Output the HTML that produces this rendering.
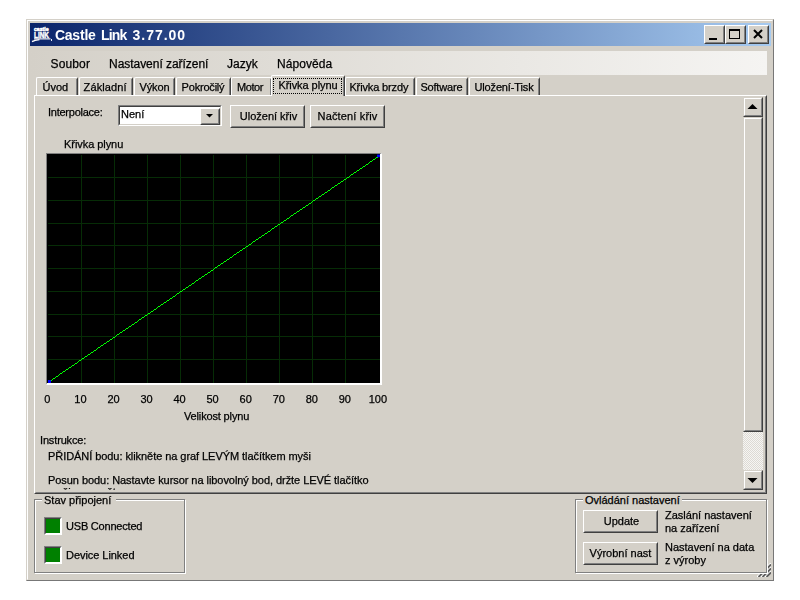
<!DOCTYPE html>
<html lang="cs">
<head>
<meta charset="utf-8">
<title>Castle Link 3.77.00</title>
<style>
html,body{margin:0;padding:0;background:#fff;}
body{width:800px;height:600px;position:relative;overflow:hidden;font-family:"Liberation Sans",sans-serif;font-size:11px;color:#000;}
.abs{position:absolute;}
.t,.tab span,.btn span,#menu span,.lbl,#title .txt{will-change:opacity;}
.t,.tab span,.btn span,#menu span,.lbl{-webkit-text-stroke:0.25px #000;}
#win{position:absolute;left:26px;top:19px;width:748px;height:562px;background:#d4d0c8;box-sizing:border-box;
 border:1px solid;border-color:#d4d0c8 #777 #777 #d4d0c8;}
#win:before{content:"";position:absolute;left:0;top:0;right:0;bottom:0;border:1px solid;border-color:#fff #d4d0c8 #d4d0c8 #fff;}
#title{position:absolute;left:30px;top:23px;width:741px;height:23px;background:linear-gradient(to right,#0a246a 0%,#a6caf0 100%);}
#title .txt{position:absolute;left:24px;top:4px;font-weight:bold;font-size:14px;line-height:17px;color:#fff;white-space:nowrap;}
.cbtn{position:absolute;top:25px;height:19px;width:21px;background:#d4d0c8;box-sizing:border-box;border:1px solid;border-color:#fff #404040 #404040 #fff;}
.cbtn:before{content:"";position:absolute;left:0;top:0;right:0;bottom:0;border:1px solid;border-color:#d4d0c8 #808080 #808080 #d4d0c8;}
#menu{position:absolute;left:30px;top:51px;width:737px;height:24px;background:linear-gradient(to right,#d4d0c8 0%,#f5f4f2 100%);}
#menu span{position:absolute;top:6px;font-size:12px;line-height:14px;white-space:nowrap;}
.t{position:absolute;white-space:nowrap;line-height:13px;font-size:11px;}
.tab{position:absolute;top:77px;height:18px;box-sizing:border-box;background:#d4d0c8;border-top:1px solid #fff;border-left:1px solid #fff;border-right:1px solid #404040;border-radius:2px 2px 0 0;}
.tab:after{content:"";position:absolute;right:0;top:1px;bottom:0;width:1px;background:#808080;}
.tab span{position:absolute;left:6px;top:3px;white-space:nowrap;line-height:13px;}
.tab.sel{top:75px;height:21px;z-index:3;}
.tab.sel span{left:6px;top:3px;}
#pane{position:absolute;left:34px;top:95px;width:733px;height:399px;box-sizing:border-box;border:1px solid;border-color:#fff #404040 #404040 #fff;}
#pane:before{content:"";position:absolute;left:0;top:0;right:0;bottom:0;border:1px solid;border-color:#d4d0c8 #808080 #808080 #d4d0c8;}
.btn{position:absolute;box-sizing:border-box;background:#d4d0c8;border:1px solid;border-color:#fff #404040 #404040 #fff;text-align:center;font-size:11px;}
.btn:before{content:"";position:absolute;left:0;top:0;right:0;bottom:0;border:1px solid;border-color:#d4d0c8 #808080 #808080 #d4d0c8;}
.btn span{position:relative;white-space:nowrap;}
.btn.sb{border-color:#d4d0c8 #404040 #404040 #d4d0c8;}
.btn.sb:before{border-color:#fff #808080 #808080 #fff;}
.sunken{position:absolute;box-sizing:border-box;border:1px solid;border-color:#808080 #fff #fff #808080;}
.sunken:before{content:"";position:absolute;left:0;top:0;right:0;bottom:0;border:1px solid;border-color:#404040 #d4d0c8 #d4d0c8 #404040;}
.sunken.w2:before{border-color:#404040 #fff #fff #404040;}
.grp{position:absolute;box-sizing:border-box;border:1px solid #808080;box-shadow:1px 1px 0 #fff, inset 1px 1px 0 #fff;}
.grp .lbl{position:absolute;top:-6px;left:7px;background:#d4d0c8;padding:0 0 0 2px;line-height:13px;height:12px;white-space:nowrap;}
</style>
</head>
<body>
<div id="win"></div>
<div id="title">
 <svg class="abs" style="left:0px;top:2px" width="24" height="20" viewBox="0 0 24 20">
  <text x="4" y="6.4" font-family="Liberation Sans, sans-serif" font-size="6" font-weight="bold" fill="#fff" stroke="#fff" stroke-width="0.55" textLength="14.5" lengthAdjust="spacingAndGlyphs">castle</text>
  <text x="4" y="13.4" font-family="Liberation Sans, sans-serif" font-size="9.6" font-weight="bold" fill="#fff" stroke="#fff" stroke-width="0.5" textLength="15" lengthAdjust="spacingAndGlyphs">LINK</text>
  <path d="M4 13.9 H20.5" stroke="#fff" stroke-width="1.1" fill="none"/>
  <path d="M2 16.6 C4 15.4 6 14.9 9.5 14.6" stroke="#fff" stroke-width="1.3" fill="none"/>
  <rect x="21" y="14" width="1" height="2" fill="#e8ecf8"/>
 </svg>
 <div class="ttl"><span class="txt" style="left:24.9px;letter-spacing:-0.21px">Castle</span> <span class="txt" style="left:71.1px;letter-spacing:-0.84px">Link</span> <span class="txt" style="left:102.6px;letter-spacing:0.97px">3.77.00</span></div>
</div>
<div class="cbtn" style="left:704px"><svg class="abs" style="left:0;top:0" width="19" height="17"><rect x="4" y="12" width="8" height="2" fill="#000"/></svg></div>
<div class="cbtn" style="left:725px"><svg class="abs" style="left:0;top:0" width="19" height="17"><rect x="3.5" y="3.5" width="10" height="9" fill="none" stroke="#000"/><rect x="3" y="3" width="11" height="2" fill="#000"/></svg></div>
<div class="cbtn" style="left:748px"><svg class="abs" style="left:0;top:0" width="19" height="17"><path d="M5 4 L13 12 M13 4 L5 12" stroke="#000" stroke-width="2"/></svg></div>

<div id="menu">
 <span style="left:20.5px;letter-spacing:0.14px">Soubor</span>
 <span style="left:79px;letter-spacing:-0.04px">Nastavení zařízení</span>
 <span style="left:197px">Jazyk</span>
 <span style="left:247px;letter-spacing:0.07px">Nápověda</span>
</div>

<div class="tab" style="left:36px;width:42px"><span style="left:5.6px;letter-spacing:-0.07px">Úvod</span></div>
<div class="tab" style="left:79px;width:54px"><span style="left:3.6px;letter-spacing:0.1px">Základní</span></div>
<div class="tab" style="left:134px;width:41px"><span style="left:4.5px;letter-spacing:-0.11px">Výkon</span></div>
<div class="tab" style="left:176px;width:55px"><span style="left:4.6px;letter-spacing:-0.2px">Pokročilý</span></div>
<div class="tab" style="left:231px;width:41px"><span style="left:5.0px;letter-spacing:-0.42px">Motor</span></div>
<div class="tab" style="left:345px;width:70px"><span style="left:3.4px;letter-spacing:-0.13px">Křivka brzdy</span></div>
<div class="tab" style="left:416px;width:52px"><span style="left:3.4px;letter-spacing:-0.18px">Software</span></div>
<div class="tab" style="left:469px;width:71px"><span style="left:4.4px;letter-spacing:-0.13px">Uložení-Tisk</span></div>
<div id="pane"></div>
<div class="tab sel" style="left:271px;width:74px"><span style="left:6.4px;letter-spacing:-0.06px">Křivka plynu</span>
 <div class="abs" style="left:1px;top:2px;width:69px;height:16px;box-sizing:border-box;border:1px dotted #000"></div>
</div>

<!-- pane content -->
<div class="t" style="left:48px;top:106px;letter-spacing:-0.25px">Interpolace:</div>
<div class="sunken" style="left:118px;top:105px;width:104px;height:21px;background:#fff">
 <div class="t" style="left:2px;top:2px">Není</div>
 <div class="btn" style="left:81px;top:2px;width:20px;height:17px"><svg class="abs" style="left:0;top:0" width="17" height="15"><path d="M5 5 L12 5 L8.5 8.5 Z" fill="#000"/></svg></div>
</div>
<div class="btn" style="left:230px;top:105px;width:75px;height:23px"><span style="top:4px;left:1px">Uložení křiv</span></div>
<div class="btn" style="left:310px;top:105px;width:75px;height:23px"><span style="top:4px;letter-spacing:0.15px">Načtení křiv</span></div>
<div class="t" style="left:64px;top:138px;letter-spacing:-0.06px">Křivka plynu</div>

<div class="abs" style="left:46px;top:153px;width:336px;height:232px;background:#000;box-sizing:border-box;border:solid;border-width:1px 2px 2px 1px;border-color:#808080 #fff #fff #808080"></div>
<svg class="abs" style="left:47px;top:154px" width="333" height="229" viewBox="0 0 333 229">
 <g stroke="#062c06" stroke-width="1" shape-rendering="crispEdges"><path d="M34.5 1 V229"/><path d="M67.5 1 V229"/><path d="M100.5 1 V229"/><path d="M133.5 1 V229"/><path d="M166.5 1 V229"/><path d="M199.5 1 V229"/><path d="M232.5 1 V229"/><path d="M265.5 1 V229"/><path d="M298.5 1 V229"/><path d="M1 23.5 H333"/><path d="M1 46.5 H333"/><path d="M1 69.5 H333"/><path d="M1 91.5 H333"/><path d="M1 114.5 H333"/><path d="M1 137.5 H333"/><path d="M1 160.5 H333"/><path d="M1 182.5 H333"/><path d="M1 205.5 H333"/></g>
 <path d="M331 2.5H332M329 3.5H331M328 4.5H329M326 5.5H328M325 6.5H326M323 7.5H325M322 8.5H323M321 9.5H322M319 10.5H321M318 11.5H319M316 12.5H318M315 13.5H316M313 14.5H315M312 15.5H313M310 16.5H312M309 17.5H310M307 18.5H309M306 19.5H307M304 20.5H306M303 21.5H304M302 22.5H303M300 23.5H302M299 24.5H300M297 25.5H299M296 26.5H297M294 27.5H296M293 28.5H294M291 29.5H293M290 30.5H291M288 31.5H290M287 32.5H288M285 33.5H287M284 34.5H285M283 35.5H284M281 36.5H283M280 37.5H281M278 38.5H280M277 39.5H278M275 40.5H277M274 41.5H275M272 42.5H274M271 43.5H272M269 44.5H271M268 45.5H269M266 46.5H268M265 47.5H266M264 48.5H265M262 49.5H264M261 50.5H262M259 51.5H261M258 52.5H259M256 53.5H258M255 54.5H256M253 55.5H255M252 56.5H253M250 57.5H252M249 58.5H250M247 59.5H249M246 60.5H247M244 61.5H246M243 62.5H244M242 63.5H243M240 64.5H242M239 65.5H240M237 66.5H239M236 67.5H237M234 68.5H236M233 69.5H234M231 70.5H233M230 71.5H231M228 72.5H230M227 73.5H228M225 74.5H227M224 75.5H225M223 76.5H224M221 77.5H223M220 78.5H221M218 79.5H220M217 80.5H218M215 81.5H217M214 82.5H215M212 83.5H214M211 84.5H212M209 85.5H211M208 86.5H209M206 87.5H208M205 88.5H206M204 89.5H205M202 90.5H204M201 91.5H202M199 92.5H201M198 93.5H199M196 94.5H198M195 95.5H196M193 96.5H195M192 97.5H193M190 98.5H192M189 99.5H190M187 100.5H189M186 101.5H187M185 102.5H186M183 103.5H185M182 104.5H183M180 105.5H182M179 106.5H180M177 107.5H179M176 108.5H177M174 109.5H176M173 110.5H174M171 111.5H173M170 112.5H171M168 113.5H170M167 114.5H168M166 115.5H167M164 116.5H166M163 117.5H164M161 118.5H163M160 119.5H161M158 120.5H160M157 121.5H158M155 122.5H157M154 123.5H155M152 124.5H154M151 125.5H152M149 126.5H151M148 127.5H149M147 128.5H148M145 129.5H147M144 130.5H145M142 131.5H144M141 132.5H142M139 133.5H141M138 134.5H139M136 135.5H138M135 136.5H136M133 137.5H135M132 138.5H133M130 139.5H132M129 140.5H130M128 141.5H129M126 142.5H128M125 143.5H126M123 144.5H125M122 145.5H123M120 146.5H122M119 147.5H120M117 148.5H119M116 149.5H117M114 150.5H116M113 151.5H114M111 152.5H113M110 153.5H111M109 154.5H110M107 155.5H109M106 156.5H107M104 157.5H106M103 158.5H104M101 159.5H103M100 160.5H101M98 161.5H100M97 162.5H98M95 163.5H97M94 164.5H95M92 165.5H94M91 166.5H92M90 167.5H91M88 168.5H90M87 169.5H88M85 170.5H87M84 171.5H85M82 172.5H84M81 173.5H82M79 174.5H81M78 175.5H79M76 176.5H78M75 177.5H76M73 178.5H75M72 179.5H73M70 180.5H72M69 181.5H70M68 182.5H69M66 183.5H68M65 184.5H66M63 185.5H65M62 186.5H63M60 187.5H62M59 188.5H60M57 189.5H59M56 190.5H57M54 191.5H56M53 192.5H54M51 193.5H53M50 194.5H51M49 195.5H50M47 196.5H49M46 197.5H47M44 198.5H46M43 199.5H44M41 200.5H43M40 201.5H41M38 202.5H40M37 203.5H38M35 204.5H37M34 205.5H35M32 206.5H34M31 207.5H32M30 208.5H31M28 209.5H30M27 210.5H28M25 211.5H27M24 212.5H25M22 213.5H24M21 214.5H22M19 215.5H21M18 216.5H19M16 217.5H18M15 218.5H16M13 219.5H15M12 220.5H13M11 221.5H12M9 222.5H11M8 223.5H9M6 224.5H8M5 225.5H6M3 226.5H5M2 227.5H3" stroke="#00ff00" stroke-width="1" fill="none" shape-rendering="crispEdges"/>
 <rect x="1" y="226" width="3" height="3" fill="#0000ff"/>
 <rect x="330" y="0.6" width="3" height="2.6" fill="#0000ff"/>
</svg>
<div class="t" style="left:27.4px;top:393px;width:40px;text-align:center">0</div><div class="t" style="left:60.4px;top:393px;width:40px;text-align:center">10</div><div class="t" style="left:93.5px;top:393px;width:40px;text-align:center">20</div><div class="t" style="left:126.5px;top:393px;width:40px;text-align:center">30</div><div class="t" style="left:159.6px;top:393px;width:40px;text-align:center">40</div><div class="t" style="left:192.6px;top:393px;width:40px;text-align:center">50</div><div class="t" style="left:225.7px;top:393px;width:40px;text-align:center">60</div><div class="t" style="left:258.8px;top:393px;width:40px;text-align:center">70</div><div class="t" style="left:291.8px;top:393px;width:40px;text-align:center">80</div><div class="t" style="left:324.8px;top:393px;width:40px;text-align:center">90</div><div class="t" style="left:357.9px;top:393px;width:40px;text-align:center">100</div>
<div class="t" style="left:184px;top:410px;letter-spacing:-0.15px">Velikost plynu</div>
<div class="t" style="left:40px;top:434px;letter-spacing:-0.15px">Instrukce:</div>
<div class="t" style="left:48px;top:450px;letter-spacing:-0.06px">PŘIDÁNÍ bodu: klikněte na graf LEVÝM tlačítkem myši</div>
<div class="t" style="left:48px;top:474px;letter-spacing:-0.055px">Posun bodu: Nastavte kursor na libovolný bod, držte LEVÉ tlačítko</div>
<div class="abs" style="left:48px;top:486px;width:330px;height:4px;overflow:hidden"><div class="t" style="left:0;top:0">myši a posuňte</div></div>

<!-- scrollbar -->
<div class="abs" style="left:743px;top:97px;width:20px;height:393px;background:conic-gradient(#f6f5f3 25%,#dddad4 0 50%,#f6f5f3 0 75%,#dddad4 0) 0 0/2px 2px"></div>
<div class="btn sb" style="left:743px;top:97px;width:20px;height:20px"><svg class="abs" style="left:0;top:0" width="18" height="18"><path d="M3.5 11 L13.5 11 L8.5 6 Z" fill="#000"/></svg></div>
<div class="btn sb" style="left:743px;top:117px;width:20px;height:315px"></div>
<div class="btn sb" style="left:743px;top:470px;width:20px;height:20px"><svg class="abs" style="left:0;top:0" width="18" height="18"><path d="M3.5 7 L13.5 7 L8.5 12 Z" fill="#000"/></svg></div>

<!-- bottom groups -->
<div class="grp" style="left:34px;top:499px;width:151px;height:74px"><div class="lbl" style="width:72px">Stav připojení</div></div>
<div class="sunken w2" style="left:44px;top:517px;width:18px;height:18px;background:#008000"></div>
<div class="sunken w2" style="left:44px;top:546px;width:18px;height:18px;background:#008000"></div>
<div class="t" style="left:66px;top:520px;letter-spacing:-0.2px">USB Connected</div>
<div class="t" style="left:66px;top:549px;letter-spacing:-0.05px">Device Linked</div>

<div class="grp" style="left:575px;top:499px;width:192px;height:74px"><div class="lbl" style="width:97px">Ovládání nastavení</div></div>
<div class="btn" style="left:583px;top:510px;width:75px;height:23px"><span style="top:4px;left:1px">Update</span></div>
<div class="btn" style="left:583px;top:542px;width:75px;height:23px"><span style="top:4px">Výrobní nast</span></div>
<div class="t" style="left:665px;top:509px">Zaslání nastavení</div>
<div class="t" style="left:665px;top:522px">na zařízení</div>
<div class="t" style="left:665px;top:541px">Nastavení na data</div>
<div class="t" style="left:665px;top:554px">z výroby</div>
<svg class="abs" style="left:757px;top:563px" width="14" height="14"><defs><clipPath id="gc"><path d="M11 0 H14 V14 H0 V11 H11 Z"/></clipPath></defs><g stroke-width="1" clip-path="url(#gc)">
 <path d="M14 0 L0 14 M14 4 L4 14 M14 8 L8 14" stroke="#fff" stroke-width="1.4"/>
 <path d="M14 1.5 L1.5 14 M14 5.5 L5.5 14 M14 9.5 L9.5 14" stroke="#606060" stroke-width="1.8"/>
</g></svg>

</body>
</html>
